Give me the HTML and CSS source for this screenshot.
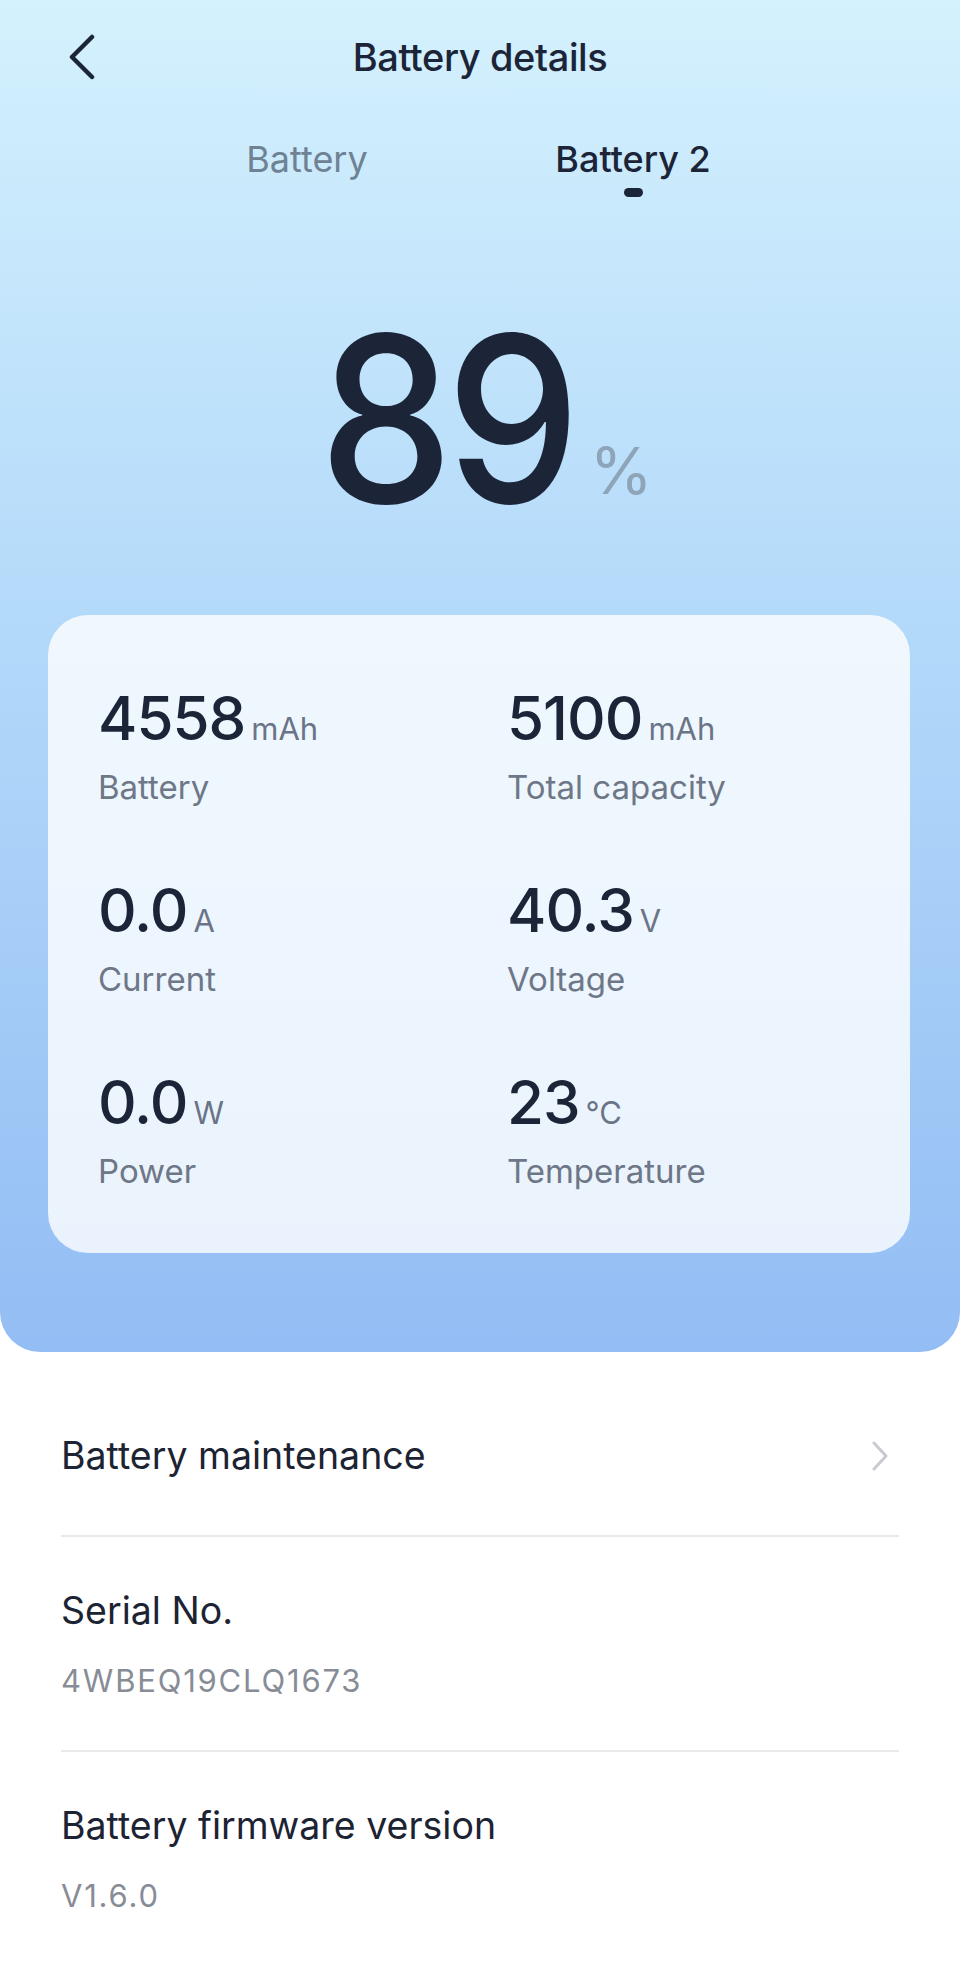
FILE: index.html
```html
<!DOCTYPE html>
<html lang="en">
<head>
    <meta charset="UTF-8">
    <meta name="viewport" content="width=device-width, initial-scale=1.0">
    <title>Battery details</title>
    <link rel="stylesheet" href="styles.css">
</head>
<body>

    <div class="hero">
        <!-- Top bar -->
        <div class="topbar">
            <div class="back">
                <svg width="30" height="46" viewBox="0 0 30 46">
                    <path d="M25 3 L5 23 L25 43" fill="none" stroke="#1c2438" stroke-width="4.5" stroke-linecap="round" stroke-linejoin="round"/>
                </svg>
            </div>
            <h1 class="title">Battery details</h1>
            <div></div>
        </div>

        <!-- Battery tabs -->
        <div class="tabs">
            <div class="tab">Battery</div>
            <div class="tab active">
                Battery 2
                <span class="dot"></span>
            </div>
        </div>

        <!-- Charge level -->
        <div class="level">
            <span class="level-num">89</span><span class="level-pct">%</span>
        </div>

        <!-- Stats -->
        <div class="card">
            <div class="stat">
                <div class="value">4558<span class="unit">mAh</span></div>
                <div class="label">Battery</div>
            </div>
            <div class="stat">
                <div class="value">5100<span class="unit">mAh</span></div>
                <div class="label">Total capacity</div>
            </div>
            <div class="stat">
                <div class="value">0.0<span class="unit">A</span></div>
                <div class="label">Current</div>
            </div>
            <div class="stat">
                <div class="value">40.3<span class="unit">V</span></div>
                <div class="label">Voltage</div>
            </div>
            <div class="stat">
                <div class="value">0.0<span class="unit">W</span></div>
                <div class="label">Power</div>
            </div>
            <div class="stat">
                <div class="value">23<span class="unit">°C</span></div>
                <div class="label">Temperature</div>
            </div>
        </div>
    </div>

    <!-- Info list -->
    <div class="info">
        <div class="row first link">
            <div class="row-title">Battery maintenance</div>
            <svg width="18" height="30" viewBox="0 0 18 30">
                <path d="M3 2 L15 15 L3 28" fill="none" stroke="#c8cacf" stroke-width="3" stroke-linecap="round" stroke-linejoin="round"/>
            </svg>
        </div>
        <div class="row">
            <div class="row-title">Serial No.</div>
            <div class="row-value">4WBEQ19CLQ1673</div>
        </div>
        <div class="row last">
            <div class="row-title">Battery firmware version</div>
            <div class="row-value">V1.6.0</div>
        </div>
    </div>

</body>
</html>
```

FILE: styles.css
```css
body {
    font-family: Inter, "Noto Sans", sans-serif;
    margin: 0;
    background-color: #fff;
    color: #1c2438;
}
.hero {
    background: linear-gradient(180deg, #d4f1fd 0%, #b4dafa 45%, #93bdf4 100%);
    border-radius: 0 0 40px 40px;
    padding-bottom: 99px;
}
.topbar {
    display: grid;
    grid-template-columns: 1fr auto 1fr;
    align-items: center;
    padding-top: 33px;
    height: 48px;
}
.back {
    padding-left: 67px;
    height: 46px;
}
.title {
    margin: 0;
    font-size: 38px;
    line-height: 48px;
    font-weight: 500;
    letter-spacing: -0.4px;
}
.tabs {
    display: flex;
    justify-content: center;
    gap: 66px;
    margin-top: 56px;
    padding-right: 20px;
}
.tab {
    width: 260px;
    display: flex;
    flex-direction: column;
    align-items: center;
    font-size: 36px;
    line-height: 44px;
    color: #6f8293;
    letter-spacing: 0;
}
.tab.active {
    color: #1c2438;
    font-weight: 500;
}
.dot {
    display: block;
    width: 19px;
    height: 9px;
    margin-top: 7px;
    border-radius: 5px;
    background-color: #1c2438;
}
.level {
    margin-top: 106px;
    text-align: center;
    line-height: 232px;
    height: 232px;
}
.level-num {
    display: inline-block;
    font-size: 232px;
    font-weight: 500;
    letter-spacing: -8px;
    color: #1c2438;
    transform: scaleX(0.92);
}
.level-pct {
    font-size: 64px;
    line-height: 1;
    color: #8ea4b8;
    margin-left: 6px;
    vertical-align: 9px;
}
.card {
    display: grid;
    grid-template-columns: 409px 1fr;
    row-gap: 67px;
    margin: 80px 50px 0 48px;
    padding: 67px 0 62px 50px;
    background-color: rgba(255, 255, 255, 0.8);
    border-radius: 40px;
}
.value {
    font-size: 60px;
    line-height: 72px;
    height: 72px;
    font-weight: 500;
    letter-spacing: -1px;
}
.unit {
    font-size: 31px;
    line-height: 1;
    font-weight: 400;
    color: #6b7487;
    margin-left: 6px;
    letter-spacing: 0;
}
.label {
    margin-top: 13px;
    font-size: 33px;
    line-height: 40px;
    color: #6e7787;
}
.info {
    padding: 0 61px;
}
.row {
    padding: 51px 0 50px;
    border-bottom: 2px solid #e8e9eb;
}
.row.first {
    padding: 81px 0 56px;
}
.row.last {
    border-bottom: none;
}
.row.link {
    display: flex;
    justify-content: space-between;
    align-items: center;
    padding-right: 10px;
}
.row-title {
    font-size: 37.5px;
    line-height: 46px;
    color: #1c2333;
}
.row-value {
    margin-top: 28px;
    font-size: 31px;
    line-height: 38px;
    letter-spacing: 1.8px;
    color: #878c96;
}
```
